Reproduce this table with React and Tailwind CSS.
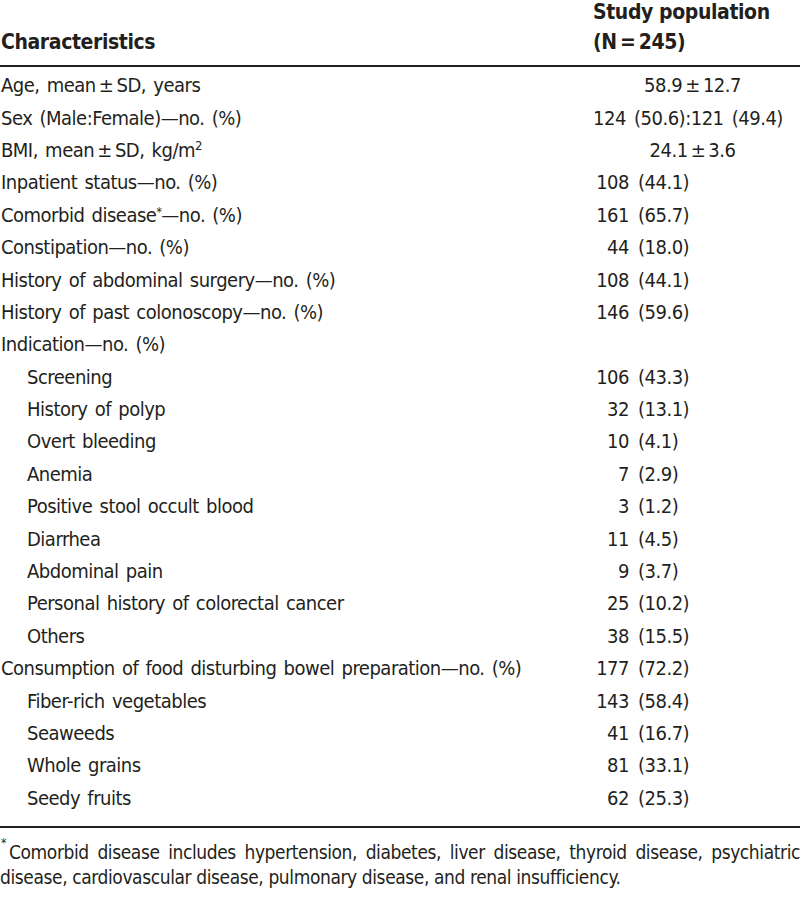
// Baseline characteristics table for a colonoscopy study population.
const rows = [
  { label: 'Age, mean\u2009±\u2009SD, years', center: '58.9\u2009±\u200912.7' },
  { label: 'Sex (Male:Female)—no. (%)', raw: '124 (50.6):121 (49.4)' },
  { label: <>BMI, mean{'\u2009±\u2009'}SD, kg/m<sup className="text-[13px]">2</sup></>, center: '24.1\u2009±\u20093.6' },
  { label: 'Inpatient status—no. (%)', n: '108', pct: '44.1' },
  { label: <>Comorbid disease<sup className="text-[12px]">*</sup>—no. (%)</>, n: '161', pct: '65.7' },
  { label: 'Constipation—no. (%)', n: '44', pct: '18.0' },
  { label: 'History of abdominal surgery—no. (%)', n: '108', pct: '44.1' },
  { label: 'History of past colonoscopy—no. (%)', n: '146', pct: '59.6' },
  { label: 'Indication—no. (%)' },
  { label: 'Screening', sub: true, n: '106', pct: '43.3' },
  { label: 'History of polyp', sub: true, n: '32', pct: '13.1' },
  { label: 'Overt bleeding', sub: true, n: '10', pct: '4.1' },
  { label: 'Anemia', sub: true, n: '7', pct: '2.9' },
  { label: 'Positive stool occult blood', sub: true, n: '3', pct: '1.2' },
  { label: 'Diarrhea', sub: true, n: '11', pct: '4.5' },
  { label: 'Abdominal pain', sub: true, n: '9', pct: '3.7' },
  { label: 'Personal history of colorectal cancer', sub: true, n: '25', pct: '10.2' },
  { label: 'Others', sub: true, n: '38', pct: '15.5' },
  { label: 'Consumption of food disturbing bowel preparation—no. (%)', n: '177', pct: '72.2' },
  { label: 'Fiber-rich vegetables', sub: true, n: '143', pct: '58.4' },
  { label: 'Seaweeds', sub: true, n: '41', pct: '16.7' },
  { label: 'Whole grains', sub: true, n: '81', pct: '33.1' },
  { label: 'Seedy fruits', sub: true, n: '62', pct: '25.3' },
];

function Value({ row }) {
  if (row.center) return <div className="pr-[8px] text-center">{row.center}</div>;
  if (row.raw) return <div className="whitespace-nowrap [word-spacing:3px]">{row.raw}</div>;
  if (!row.n) return null;
  return (
    <div className="flex">
      <span className="w-[36px] text-right">{row.n}</span>
      <span className="ml-[9px]">({row.pct})</span>
    </div>
  );
}

export default function App() {
  return (
    <div className="h-[898px] w-[800px] overflow-hidden bg-white text-[#231f20]" style={{ fontFamily: '"DejaVu Sans Condensed", "Liberation Sans", sans-serif' }}>
      <div className="grid h-[65px] grid-cols-[593px_1fr] text-[21px] font-bold leading-[30px] tracking-[-0.4px]">
        <div className="flex items-end pb-[8px] pl-[1px]">Characteristics</div>
        <div className="-mt-[3px]">
          <div>Study population</div>
          <div>(N{'\u2009=\u2009'}245)</div>
        </div>
      </div>
      <div className="h-[2px] bg-[#231f20]" />
      <div className="pt-[2px] text-[20px] tracking-[-0.5px] [word-spacing:2px]">
        {rows.map((row, i) => (
          <div key={i} className="grid h-[32.4px] grid-cols-[593px_1fr] items-center">
            <div className={row.sub ? 'pl-[27px]' : 'pl-[1px]'}>{row.label}</div>
            <Value row={row} />
          </div>
        ))}
      </div>
      <div className="mt-[12px] h-[2px] bg-[#231f20]" />
      <div className="mt-[12px] text-[19px] leading-[25px] tracking-[-0.4px]">
        <p className="text-justify [text-align-last:justify]">
          <span className="mr-[3px] ml-[1px] inline-block -translate-y-[3px] align-top text-[12px] leading-none">*</span>Comorbid disease includes hypertension, diabetes, liver disease, thyroid disease, psychiatric
        </p>
        <p>disease, cardiovascular disease, pulmonary disease, and renal insufficiency.</p>
      </div>
    </div>
  );
}
